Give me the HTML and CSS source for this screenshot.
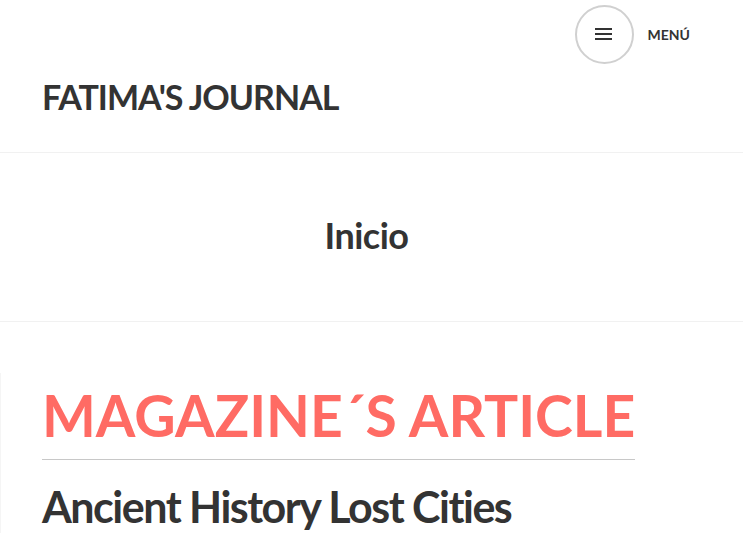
FILE: index.html
```html
<!DOCTYPE html>
<html lang="es">
<head>
<meta charset="utf-8">
<title>Fatima's Journal</title>
<link rel="stylesheet" href="styles.css">
</head>
<body>
<header class="site-header">
  <div class="top-bar">
    <button class="menu-toggle" type="button" aria-label="Menú">
      <svg width="18" height="12" viewBox="0 0 18 12" aria-hidden="true">
        <rect x="0" y="0" width="17" height="2" fill="#333"/>
        <rect x="0" y="5" width="17" height="2" fill="#333"/>
        <rect x="0" y="10" width="17" height="2" fill="#333"/>
      </svg>
    </button>
    <span class="menu-label">MENÚ</span>
  </div>
  <h1 class="site-title">FATIMA'S JOURNAL</h1>
</header>
<section class="page-header">
  <h2 class="page-title">Inicio</h2>
</section>
<main class="content">
  <article class="entry">
    <h2 class="section-title"><span class="section-title-text">MAGAZINE´S ARTICLE</span></h2>
    <h3 class="article-title">Ancient History Lost Cities</h3>
  </article>
</main>
</body>
</html>
```
FILE: styles.css
```css
html {
  overflow: hidden;
}

body {
  margin: 0;
  padding: 0;
  background: #fff;
  color: #333;
  font-family: "Lato", "Open Sans", sans-serif;
}

.site-header {
  border-bottom: 1px solid #f1f1f1;
  padding: 0 0 35px 42px;
}

.top-bar {
  display: flex;
  justify-content: flex-end;
  align-items: center;
  gap: 14px;
  padding: 5px 53px 0 0;
  height: 58px;
}

.menu-toggle {
  width: 59px;
  height: 59px;
  box-sizing: border-box;
  border: 2px solid #d0d0d0;
  border-radius: 50%;
  background: #fff;
  display: flex;
  align-items: center;
  justify-content: center;
  padding: 0;
  margin-left: 1px;
}

.menu-label {
  font-size: 14px;
  font-weight: 700;
  letter-spacing: 0;
  color: #333;
}

.site-title {
  margin: 14px 0 0;
  font-size: 34px;
  line-height: 40px;
  font-weight: 700;
  letter-spacing: -1px;
}

.page-header {
  border-bottom: 1px solid #f1f1f1;
  padding: 62px 10px 66px 0;
  text-align: center;
}

.page-title {
  margin: 0;
  font-size: 36px;
  line-height: 40px;
  font-weight: 700;
  letter-spacing: -0.5px;
}

.content {
  padding-top: 51px;
}

.entry {
  border-left: 1px solid #f5f5f5;
  padding: 14px 0 0 41px;
}

.section-title {
  margin: 0;
  font-size: 57px;
  line-height: 57px;
  font-weight: 700;
  color: #ff6b64;
}

.section-title-text {
  display: inline-block;
  padding-bottom: 15px;
  border-bottom: 1px solid #c8c8c8;
}

.article-title {
  margin: 21px 0 0;
  font-size: 43px;
  line-height: 52px;
  font-weight: 700;
  letter-spacing: -1.5px;
}
```
